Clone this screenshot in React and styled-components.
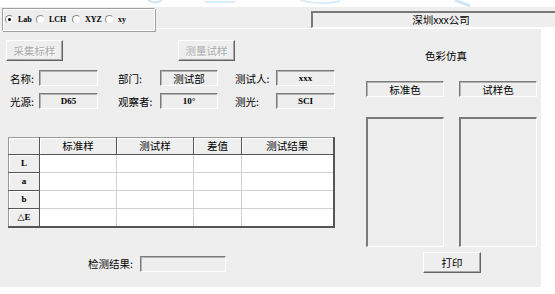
import React from "react";
import styled, { createGlobalStyle } from "styled-components";

const Global = createGlobalStyle`
  html, body { margin: 0; padding: 0; background: #ffffff; }
  body { width: 555px; height: 294px; overflow: hidden; font-family: "Noto Sans CJK SC", "Liberation Sans", sans-serif; }
`;

const cjk = `"Noto Sans CJK SC", "Noto Sans CJK TC", sans-serif`;
const serif = `"Liberation Serif", "DejaVu Serif", "Noto Sans CJK SC", serif`;

const Page = styled.div`
  width: 555px;
  height: 294px;
  background: #ffffff;
  display: flex;
  flex-direction: column;
`;

const Watermark = styled.div`
  height: 7px;
  display: flex;
`;

const Header = styled.div`
  height: 21px;
  background: #eeeeee;
  border-bottom: 1px solid #ffffff;
  display: flex;
  align-items: flex-start;
  padding-left: 2px;
  position: relative;
  z-index: 1;
`;

const RadioBox = styled.div`
  box-sizing: border-box;
  width: 153px;
  height: 23px;
  margin-top: 1px;
  border-top: 1px solid #a0a0a0;
  border-left: 1px solid #a0a0a0;
  border-right: 1px solid #ffffff;
  border-bottom: 1px solid #ffffff;
  box-shadow: 1px 1px 0 #a0a0a0, inset 1px 1px 0 #ffffff;
  background: #eeeeee;
  display: flex;
  align-items: center;
  padding-left: 2px;
`;

const RadioItem = styled.label`
  display: flex;
  align-items: center;
  width: ${(p) => p.$w}px;
  font-family: ${serif};
  font-weight: bold;
  font-size: 8px;
  color: #000;
  white-space: nowrap;
`;

const RadioDot = styled.span`
  box-sizing: border-box;
  flex: none;
  width: 9px;
  height: 9px;
  border-radius: 50%;
  border: 1px solid #8a8a8a;
  border-right-color: #e8e8e8;
  border-bottom-color: #e8e8e8;
  background: #ffffff;
  margin-right: 4px;
  display: flex;
  align-items: center;
  justify-content: center;
  &::after {
    content: "";
    width: 3px;
    height: 3px;
    border-radius: 50%;
    background: ${(p) => (p.$on ? "#000" : "transparent")};
  }
`;

const TitleField = styled.div`
  box-sizing: border-box;
  margin-left: auto;
  margin-top: 4px;
  width: 244px;
  height: 17px;
  border-top: 2px solid #7a7a7a;
  border-left: 2px solid #7a7a7a;
  border-bottom: 1px solid #ffffff;
  font-family: ${cjk};
  font-size: 10.5px;
  line-height: 14px;
  text-align: center;
  color: #000;
  padding-left: 14px;
`;

const Body = styled.div`
  width: 541px;
  height: 258px;
  background: #eeeeee;
  display: flex;
`;

const LeftCol = styled.div`
  width: 355px;
  display: flex;
  flex-direction: column;
`;

const RightCol = styled.div`
  flex: 1;
  display: flex;
  flex-direction: column;
  padding-left: 11px;
`;

const ButtonRow = styled.div`
  display: flex;
  margin-top: 11px;
  padding-left: 6px;
  gap: 115px;
`;

const Button = styled.button`
  box-sizing: border-box;
  width: ${(p) => p.$w}px;
  height: ${(p) => p.$h}px;
  padding: 0;
  background: #eeeeee;
  border-top: 1px solid #ffffff;
  border-left: 1px solid #ffffff;
  border-right: 1px solid #646464;
  border-bottom: 1px solid #646464;
  box-shadow: inset -1px -1px 0 #a8a8a8;
  font-family: ${cjk};
  font-size: 10.5px;
  color: ${(p) => (p.disabled ? "#a8a8a8" : "#000")};
  text-shadow: ${(p) => (p.disabled ? "1px 1px 0 #ffffff" : "none")};
`;

const FormRow = styled.div`
  display: flex;
  align-items: center;
  padding-left: 10px;
  margin-top: ${(p) => p.$mt}px;
  height: 16px;
`;

const Label = styled.span`
  width: ${(p) => p.$w}px;
  margin-left: ${(p) => p.$ml || 0}px;
  font-family: ${cjk};
  font-size: 10.5px;
  color: #000;
  white-space: nowrap;
`;

const Field = styled.div`
  box-sizing: border-box;
  width: ${(p) => p.$w}px;
  height: ${(p) => p.$h || 16}px;
  border-top: 1px solid #7a7a7a;
  border-left: 1px solid #7a7a7a;
  border-right: 1px solid #ffffff;
  border-bottom: 1px solid #ffffff;
  box-shadow: inset 1px 1px 0 #b4b4b4;
  background: #eeeeee;
  display: flex;
  align-items: center;
  justify-content: center;
  font-family: ${(p) => (p.$latin ? serif : cjk)};
  font-weight: ${(p) => (p.$latin ? "bold" : "normal")};
  font-size: ${(p) => (p.$latin ? 9 : 10.5)}px;
  color: #000;
`;

const Table = styled.table`
  margin-top: 28px;
  margin-left: 8px;
  border-collapse: collapse;
  border-top: 1px solid #9a9a9a;
  border-left: 1px solid #9a9a9a;
  border-right: 2px solid #555555;
  border-bottom: 2px solid #555555;
  table-layout: fixed;
  width: 325px;
  line-height: 1;
`;

const HeadRow = styled.tr`
  height: 17px;
`;

const DataRow = styled.tr`
  height: 18px;
`;

const Th = styled.th`
  box-sizing: border-box;
  padding: 0;
  background: #efefef;
  border-right: 1px solid #555555;
  border-bottom: 1px solid #555555;
  box-shadow: inset 1px 1px 0 #ffffff;
  font-family: ${cjk};
  font-weight: normal;
  font-size: 10.5px;
  line-height: 1;
  color: #000;
  width: ${(p) => p.$w}px;
`;

const RowHead = styled.th`
  padding: 0;
  background: #efefef;
  border-right: 1px solid #555555;
  border-bottom: 1px solid #555555;
  box-shadow: inset 1px 1px 0 #ffffff;
  font-family: ${serif};
  font-weight: bold;
  font-size: 9px;
  line-height: 1;
  color: #000;
`;

const Td = styled.td`
  padding: 0;
  background: #ffffff;
  border-right: 1px solid #d0d0d0;
  border-bottom: 1px solid #d0d0d0;
`;

const ResultRow = styled.div`
  display: flex;
  align-items: center;
  margin-top: 28px;
  padding-left: 88px;
  height: 16px;
`;

const SimTitle = styled.div`
  margin-top: 20px;
  padding-left: 59px;
  font-family: ${cjk};
  font-size: 10.5px;
  color: #000;
  height: 14px;
  line-height: 14px;
`;

const SwatchRow = styled.div`
  display: flex;
  gap: 15px;
  margin-top: ${(p) => p.$mt}px;
`;

const Swatch = styled.div`
  box-sizing: border-box;
  width: 78px;
  height: 130px;
  border-top: 2px solid #7a7a7a;
  border-left: 2px solid #7a7a7a;
  border-right: 1px solid #ffffff;
  border-bottom: 1px solid #ffffff;
  background: #eeeeee;
`;

const PrintWrap = styled.div`
  display: flex;
  margin-top: 5px;
  padding-left: 57px;
`;

const rows = ["L", "a", "b", "△E"];

export default function App() {
  return (
    <Page>
      <Global />
      <Watermark>
        <svg width="555" height="7" viewBox="0 0 555 7">
          <path d="M148 0 Q155 5 162 0" stroke="#cfe6f7" strokeWidth="2" fill="none" />
          <path d="M205 2 L235 2" stroke="#d8ecf9" strokeWidth="2" fill="none" />
          <path d="M300 0 Q320 6 340 1" stroke="#d8ecf9" strokeWidth="2" fill="none" />
          <path d="M455 0 L470 6" stroke="#cfe6f7" strokeWidth="3" fill="none" />
        </svg>
      </Watermark>
      <Header>
        <RadioBox>
          <RadioItem $w={31}><RadioDot $on />Lab</RadioItem>
          <RadioItem $w={36}><RadioDot />LCH</RadioItem>
          <RadioItem $w={33}><RadioDot />XYZ</RadioItem>
          <RadioItem $w={30}><RadioDot />xy</RadioItem>
        </RadioBox>
        <TitleField>深圳xxx公司</TitleField>
      </Header>
      <Body>
        <LeftCol>
          <ButtonRow>
            <Button disabled $w={57} $h={21}>采集标样</Button>
            <Button disabled $w={57} $h={21}>测量试样</Button>
          </ButtonRow>
          <FormRow $mt={9}>
            <Label $w={29}>名称:</Label>
            <Field $w={59} />
            <Label $w={42} $ml={20}>部门:</Label>
            <Field $w={58}>测试部</Field>
            <Label $w={41} $ml={17}>测试人:</Label>
            <Field $w={59} $latin>xxx</Field>
          </FormRow>
          <FormRow $mt={7}>
            <Label $w={29}>光源:</Label>
            <Field $w={59} $latin>D65</Field>
            <Label $w={42} $ml={20}>观察者:</Label>
            <Field $w={58} $latin>10°</Field>
            <Label $w={41} $ml={17}>测光:</Label>
            <Field $w={59} $latin>SCI</Field>
          </FormRow>
          <Table>
            <thead>
              <HeadRow>
                <Th $w={31}></Th>
                <Th $w={77}>标准样</Th>
                <Th $w={77}>测试样</Th>
                <Th $w={48}>差值</Th>
                <Th $w={92}>测试结果</Th>
              </HeadRow>
            </thead>
            <tbody>
              {rows.map((r) => (
                <DataRow key={r}>
                  <RowHead>{r}</RowHead>
                  <Td />
                  <Td />
                  <Td />
                  <Td />
                </DataRow>
              ))}
            </tbody>
          </Table>
          <ResultRow>
            <Label $w={52}>检测结果:</Label>
            <Field $w={86} />
          </ResultRow>
        </LeftCol>
        <RightCol>
          <SimTitle>色彩仿真</SimTitle>
          <SwatchRow $mt={18}>
            <Field $w={78} $h={16}>标准色</Field>
            <Field $w={78} $h={16}>试样色</Field>
          </SwatchRow>
          <SwatchRow $mt={20}>
            <Swatch />
            <Swatch />
          </SwatchRow>
          <PrintWrap>
            <Button $w={58} $h={21}>打印</Button>
          </PrintWrap>
        </RightCol>
      </Body>
    </Page>
  );
}
